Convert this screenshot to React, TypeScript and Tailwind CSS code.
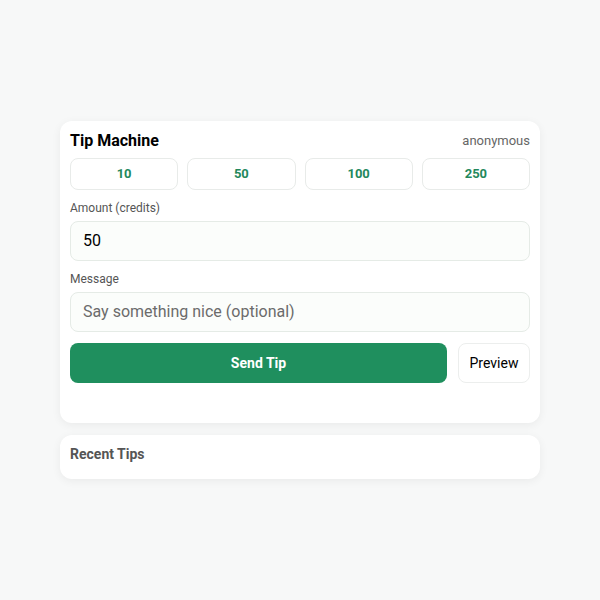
const PRESETS = [10, 50, 100, 250];

export default function App() {
  return (
    <div
      className="flex min-h-[600px] w-full flex-col items-center bg-[#f7f8f8] pt-[121px]"
      style={{ fontFamily: "Roboto, 'Liberation Sans', sans-serif" }}
    >
      <div className="w-[480px]">
        {/* Tip form */}
        <div className="rounded-xl bg-white px-[10px] pb-10 pt-[10px] shadow-[0_2px_10px_rgba(0,0,0,0.06)]">
          <div className="flex h-5 items-center justify-between">
            <h1 className="text-[16px] font-bold leading-5 text-black">Tip Machine</h1>
            <span className="text-[13px] leading-5 text-[#666]">anonymous</span>
          </div>

          <div className="mt-[7px] grid grid-cols-4 gap-[9px]">
            {PRESETS.map((v) => (
              <button
                key={v}
                className="h-8 rounded-lg border border-[#e8ebe9] bg-white text-[13px] font-bold text-[#23885c]"
              >
                {v}
              </button>
            ))}
          </div>

          <label className="mt-[9px] block text-[12px] leading-[18px] text-[#555]">Amount (credits)</label>
          <div className="mt-[4px] flex h-10 items-center rounded-lg border border-[#e5ebe6] bg-[#fbfdfb] px-3 text-[16px] text-black">
            50
          </div>

          <label className="mt-[9px] block text-[12px] leading-[18px] text-[#555]">Message</label>
          <div className="mt-[4px] flex h-10 items-center rounded-lg border border-[#e5ebe6] bg-[#fbfdfb] px-3 text-[16px] text-[#6b6b6b]">
            Say something nice (optional)
          </div>

          <div className="mt-[11px] flex gap-[11px]">
            <button className="h-10 flex-1 rounded-lg bg-[#1f8f5e] text-[14px] font-bold text-white">
              Send Tip
            </button>
            <button className="h-10 w-[72px] rounded-lg border border-[#eceeed] bg-white text-[14px] text-black">
              Preview
            </button>
          </div>
        </div>

        {/* Recent tips */}
        <div className="mt-3 rounded-xl bg-white px-[10px] pb-[14px] pt-[8px] shadow-[0_2px_10px_rgba(0,0,0,0.06)]">
          <h2 className="text-[14px] font-bold leading-[22px] text-[#555]">Recent Tips</h2>
        </div>
      </div>
    </div>
  );
}
